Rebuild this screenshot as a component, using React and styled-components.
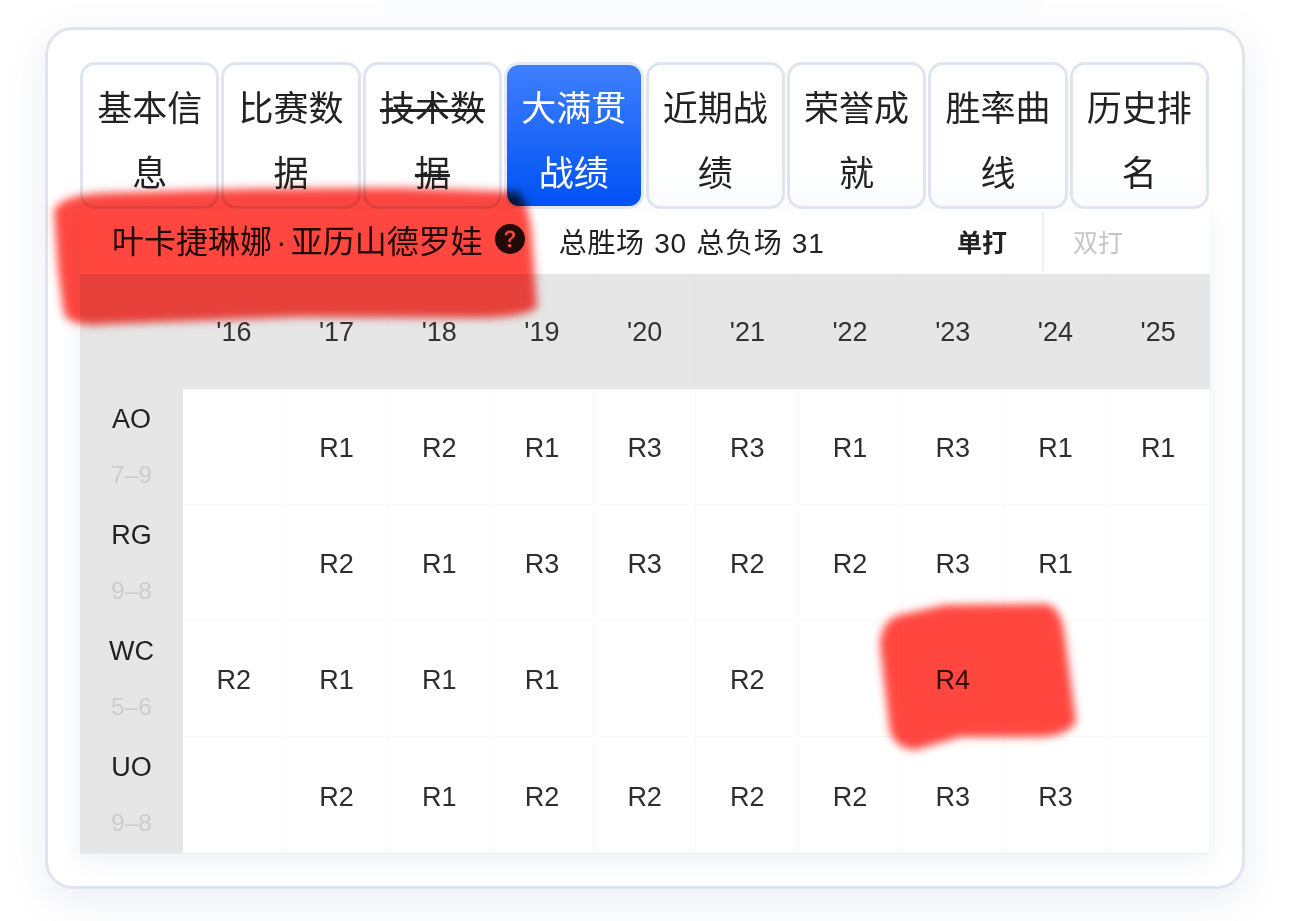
import styled, { createGlobalStyle } from "styled-components";
import { BsQuestionCircleFill } from "react-icons/bs";

const FONT = `"Liberation Sans", "Noto Sans CJK SC", sans-serif`;

const GlobalStyle = createGlobalStyle`
  html, body {
    margin: 0;
    height: 921px;
    overflow: hidden;
    background: #fff;
    font-family: ${ FONT };
    color: #222;
  }
`

const Page = styled.div`
  position: relative;
  display: flow-root;
  width: 1290px;
  height: 921px;
  box-sizing: border-box;
  padding: 0 45px;
`

const TopShadow = styled.div`
  width: 640px;
  height: 0;
  margin: 0 0 27px 345px;
  box-shadow: 0 0 16px 6px rgba(90, 110, 150, 0.05);
`

const Card = styled.div`
  width: 1200px;
  height: 862px;
  box-sizing: border-box;
  padding: 32px;
  background: #fff;
  border: 3px solid #dfe5ee;
  border-radius: 28px;
  box-shadow: 0 10px 40px rgba(90, 110, 150, 0.12);
`

const Tabs = styled.div`
  display: grid;
  grid-template-columns: repeat(8, 1fr);
  gap: 2px;
  width: 1129px;
`

const Tab = styled.div`
  height: 147px;
  box-sizing: border-box;
  padding: 11px 12px 0;
  border: 3px solid ${ ({ $active }) => $active ? "#e3ebf7" : "#dfe5ee" };
  border-radius: 15px;
  background: ${ ({ $active }) => $active
    ? "linear-gradient(180deg, #3f7ffb 0%, #0052f5 100%)"
    : "linear-gradient(180deg, #fff 75%, #fafbfd 100%)" };
  color: ${ ({ $active }) => $active ? "#fff" : "#222" };
  font-size: 35px;
  line-height: 65px;
  text-align: center;
  text-decoration: ${ ({ $struck }) => $struck ? "line-through" : "none" };
  overflow: hidden;
`

const Board = styled.div`
  box-shadow: 0 6px 22px rgba(90, 110, 150, 0.1);
`

const Toolbar = styled.div`
  display: flex;
  align-items: center;
  height: 65px;
  padding-left: 32px;
  background: #fff;
`

const PlayerName = styled.div`
  margin-bottom: 6px;
  font-size: 32px;
  white-space: nowrap;
`

const NameDot = styled.span`
  margin: 0 4px;
`

const HelpIcon = styled(BsQuestionCircleFill)`
  width: 30px;
  height: 30px;
  margin: 0 0 5px 12px;
  color: #222;
`

const Summary = styled.div`
  margin: 0 0 1px 34px;
  font-size: 28px;
  letter-spacing: 0.7px;
  word-spacing: 1px;
  white-space: nowrap;
`

const Segments = styled.div`
  display: flex;
  align-self: stretch;
  align-items: center;
  margin-left: auto;
`

const Segment = styled.div`
  width: ${ ({ $wide }) => $wide ? 168 : 118 }px;
  box-sizing: border-box;
  height: 59px;
  line-height: 63px;
  padding-left: ${ ({ $wide }) => $wide ? 29 : 33 }px;
  font-size: 25px;
  font-weight: ${ ({ $active }) => $active ? 700 : 400 };
  color: ${ ({ $active }) => $active ? "#222" : "#c6c6c6" };
  border-left: ${ ({ $divided }) => $divided ? "2px solid #eeeeee" : "none" };
`

const Grid = styled.div`
  display: grid;
  grid-template-columns: 103px repeat(10, 1fr);
  grid-template-rows: 115px repeat(4, 116px);
  border-bottom: 1px solid #eeeeee;
`

const HeadCell = styled.div`
  display: flex;
  align-items: center;
  justify-content: center;
  padding-top: 2px;
  background: #e6e6e6;
  border-right: 1px solid #e4e4e4;
  font-size: 27px;
  color: #333;
`

const RowLabel = styled.div`
  display: flex;
  flex-direction: column;
  align-items: center;
  padding-top: 2px;
  background: #e6e6e6;
  line-height: 56px;
`

const Major = styled.div`
  font-size: 27px;
  color: #222;
`

const Record = styled.div`
  font-size: 24.5px;
  color: #cdcdcd;
`

const Cell = styled.div`
  display: flex;
  align-items: center;
  justify-content: center;
  padding-top: 4px;
  border-right: 1px solid #f8f8f8;
  border-bottom: ${ ({ $last }) => $last ? "none" : "1px solid #f8f8f8" };
  font-size: 27px;
  color: #2e2e2e;
`

const Scribbles = styled.svg`
  position: absolute;
  inset: 0;
  width: 1290px;
  height: 921px;
  pointer-events: none;
  mix-blend-mode: multiply;
`

const TABS = ["基本信息", "比赛数据", "技术数据", "大满贯战绩", "近期战绩", "荣誉成就", "胜率曲线", "历史排名"]
const YEARS = ["'16", "'17", "'18", "'19", "'20", "'21", "'22", "'23", "'24", "'25"]
const ROWS = [
  { name: "AO", record: "7–9", rounds: ["", "R1", "R2", "R1", "R3", "R3", "R1", "R3", "R1", "R1"] },
  { name: "RG", record: "9–8", rounds: ["", "R2", "R1", "R3", "R3", "R2", "R2", "R3", "R1", ""] },
  { name: "WC", record: "5–6", rounds: ["R2", "R1", "R1", "R1", "", "R2", "", "R4", "", ""] },
  { name: "UO", record: "9–8", rounds: ["", "R2", "R1", "R2", "R2", "R2", "R2", "R3", "R3", ""] },
]

const App = () => (
  <Page>
    <GlobalStyle/>
    <TopShadow/>
    <Card>
      <Tabs>
        { TABS.map(tab => (
          <Tab key={ tab } $active={ tab === "大满贯战绩" } $struck={ tab === "技术数据" }>{ tab }</Tab>
        )) }
      </Tabs>
      <Board>
        <Toolbar>
          <PlayerName>叶卡捷琳娜<NameDot>·</NameDot>亚历山德罗娃</PlayerName>
          <HelpIcon/>
          <Summary>总胜场 30 总负场 31</Summary>
          <Segments>
            <Segment $active>单打</Segment>
            <Segment $wide $divided>双打</Segment>
          </Segments>
        </Toolbar>
        <Grid>
          <HeadCell/>
          { YEARS.map(year => <HeadCell key={ year }>{ year }</HeadCell>) }
          { ROWS.map((row, r) => [
            <RowLabel key={ row.name }>
              <Major>{ row.name }</Major>
              <Record>{ row.record }</Record>
            </RowLabel>,
            ...row.rounds.map((round, i) => (
              <Cell key={ `${ row.name }-${ i }` } $last={ r === ROWS.length - 1 }>{ round }</Cell>
            )),
          ]) }
        </Grid>
      </Board>
    </Card>
    <Scribbles viewBox="0 0 1290 921">
      <defs>
        <filter id="soft" x="-10%" y="-10%" width="120%" height="120%">
          <feGaussianBlur stdDeviation="4.5"/>
        </filter>
      </defs>
      <path filter="url(#soft)" fill="#ff4740"
            d="M54 210 Q62 194 110 193 L250 189 L400 188 L518 192 Q530 205 532 240 L537 308 Q520 318 480 318 L300 317 L110 324 Q72 328 64 314 L58 270 Z"/>
      <path filter="url(#soft)" fill="#ff4740"
            d="M880 645 Q881 620 900 615 L945 605 L1047 604 Q1060 608 1064 630 L1076 722 Q1067 736 1040 737 L960 737 L915 750 Q896 748 890 732 L884 680 Z"/>
    </Scribbles>
  </Page>
);

export default App;
